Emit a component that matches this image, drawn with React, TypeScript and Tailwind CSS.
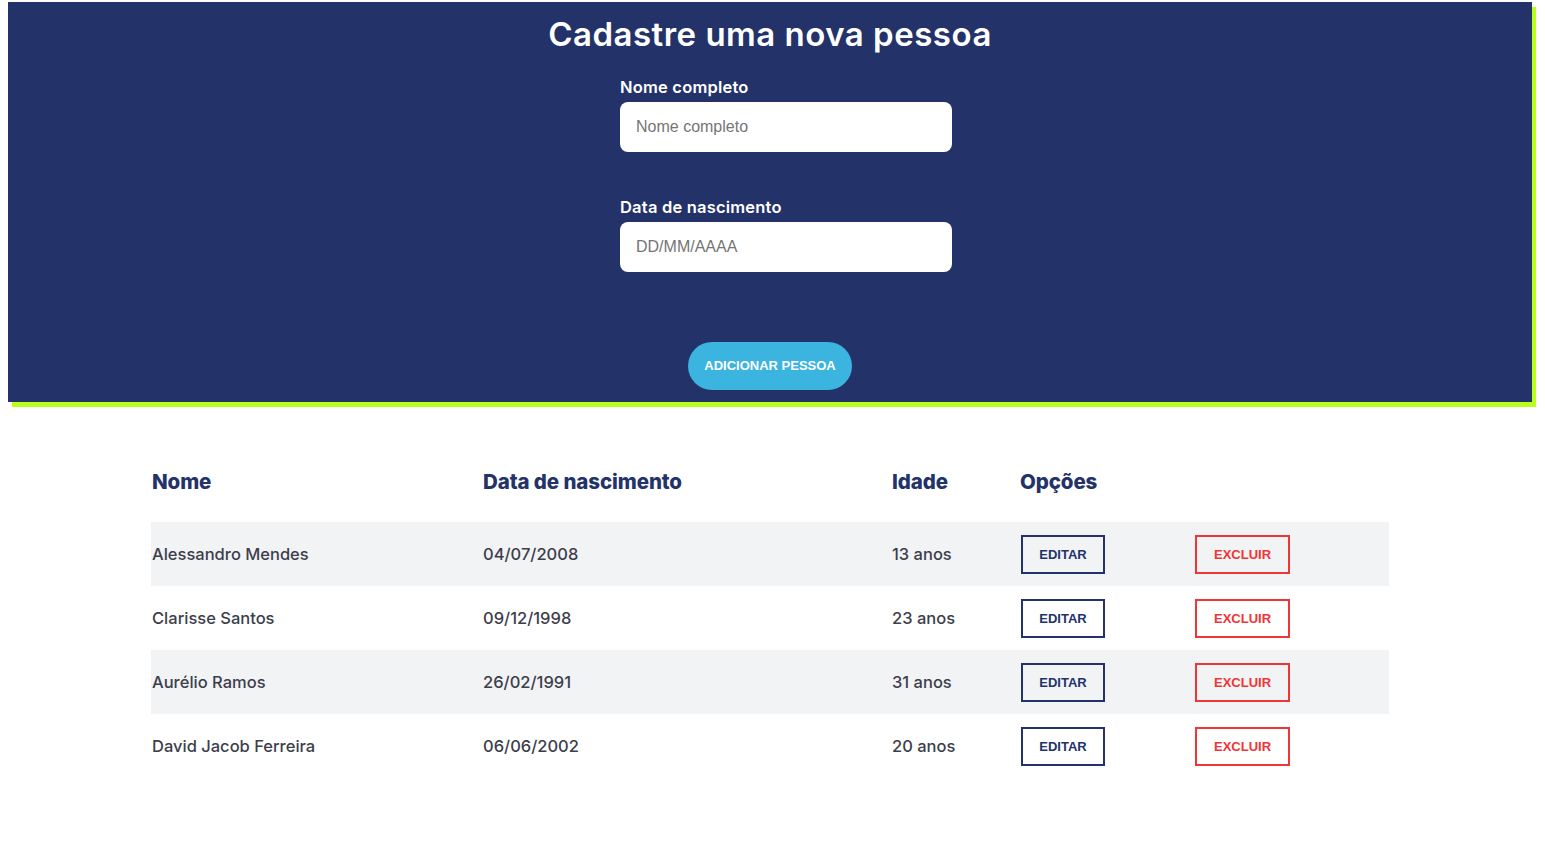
import React from "react";

type Person = {
  name: string;
  birth: string;
  age: string;
};

const people: Person[] = [
  { name: "Alessandro Mendes", birth: "04/07/2008", age: "13 anos" },
  { name: "Clarisse Santos", birth: "09/12/1998", age: "23 anos" },
  { name: "Aurélio Ramos", birth: "26/02/1991", age: "31 anos" },
  { name: "David Jacob Ferreira", birth: "06/06/2002", age: "20 anos" },
];

const heading = "font-['Inter','Open_Sans',sans-serif]";
const arial = "font-['Liberation_Sans',Arial,sans-serif]";

const Field: React.FC<{ label: string; placeholder: string }> = ({
  label,
  placeholder,
}) => {
  return (
    <div className="flex flex-col w-[332px]">
      <label className={`${heading} text-white text-[16.5px] font-semibold leading-[20px] mb-[5px] tracking-[0.2px]`}>
        {label}
      </label>
      <input
        type="text"
        placeholder={placeholder}
        className={`${arial} h-[50px] w-full rounded-[8px] bg-white px-4 text-[16px] text-gray-800 placeholder:text-[#757575] outline-none`}
      />
    </div>
  );
};

const PersonForm: React.FC = () => {
  return (
    <section className="ml-[8px] mt-[2px] w-[1524px] h-[400px] bg-[#233369] shadow-[4px_5px_0_#b9ff1c] flex flex-col items-center">
      <h1 className={`${heading} text-white text-[33px] font-semibold leading-[40px] mt-[12px] tracking-[0.5px]`}>
        Cadastre uma nova pessoa
      </h1>
      <div className="mt-[23px] flex flex-col gap-[45px] self-start ml-[612px]">
        <Field label="Nome completo" placeholder="Nome completo" />
        <Field label="Data de nascimento" placeholder="DD/MM/AAAA" />
      </div>
      <button
        className={`${arial} mt-[70px] h-[48px] w-[164px] rounded-full bg-[#3bb4e0] text-white text-[13px] font-bold`}
      >
        ADICIONAR PESSOA
      </button>
    </section>
  );
};

const PeopleTable: React.FC = () => {
  return (
    <div className="ml-[151px] mt-[60px] w-[1238px]">
      <table className="w-full border-collapse text-left">
        <thead>
          <tr className={`${heading} text-[#233369] text-[20.5px] font-extrabold h-[60px] align-top tracking-[-0.1px]`}>
            <th className="w-[331px] pl-[1px] pt-[5px] font-extrabold">Nome</th>
            <th className="w-[409px] pl-[1px] pt-[5px] font-extrabold">Data de nascimento</th>
            <th className="w-[128px] pl-[1px] pt-[5px] font-extrabold">Idade</th>
            <th className="w-[175px] pl-[1px] pt-[5px] font-extrabold">Opções</th>
            <th></th>
          </tr>
        </thead>
        <tbody>
          {people.map((p, i) => (
            <tr
              key={p.name}
              className={`h-[64px] ${heading} text-[16.5px] font-medium text-[#3d3e4b] ${
                i % 2 === 0 ? "bg-[#f2f3f5]" : "bg-white"
              }`}
            >
              <td className="pl-[1px]">{p.name}</td>
              <td className="pl-[1px]">{p.birth}</td>
              <td className="pl-[1px]">{p.age}</td>
              <td className="pl-[2px]">
                <button
                  className={`${arial} h-[39px] w-[84px] border-2 border-[#233369] text-[#233369] text-[13px] font-bold pt-[1px]`}
                >
                  EDITAR
                </button>
              </td>
              <td className="pl-[1px]">
                <button
                  className={`${arial} h-[39px] w-[95px] border-2 border-[#f03535] text-[#f03535] text-[13px] font-bold pt-[1px]`}
                >
                  EXCLUIR
                </button>
              </td>
            </tr>
          ))}
        </tbody>
      </table>
    </div>
  );
};

export default function App() {
  return (
    <div className="min-h-screen bg-white pb-10">
      <PersonForm />
      <PeopleTable />
    </div>
  );
}
